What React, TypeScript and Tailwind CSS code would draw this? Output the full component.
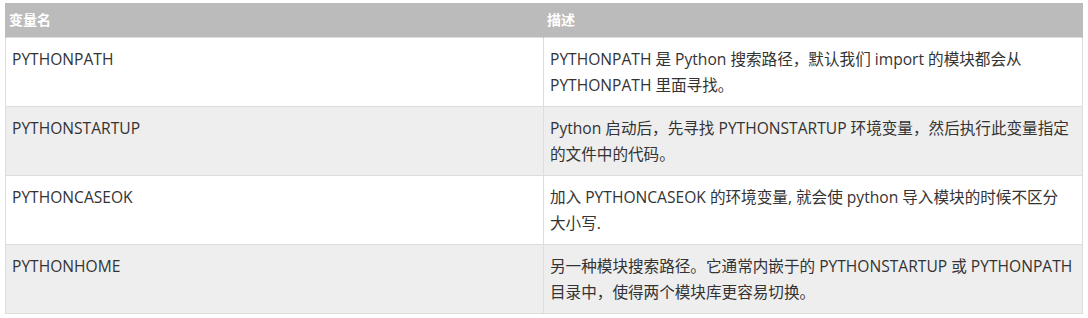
import type { ReactNode } from "react";

const rows: { name: string; desc: ReactNode }[] = [
  {
    name: "PYTHONPATH",
    desc: "PYTHONPATH 是 Python 搜索路径，默认我们 import 的模块都会从 PYTHONPATH 里面寻找。",
  },
  {
    name: "PYTHONSTARTUP",
    desc: "Python 启动后，先寻找 PYTHONSTARTUP 环境变量，然后执行此变量指定的文件中的代码。",
  },
  {
    name: "PYTHONCASEOK",
    desc: (
      <>
        加入 PYTHONCASEOK 的环境变量, 就会使 python 导入模块的时候不区分
        <span className="whitespace-nowrap">大小写.</span>
      </>
    ),
  },
  {
    name: "PYTHONHOME",
    desc: "另一种模块搜索路径。它通常内嵌于的 PYTHONSTARTUP 或 PYTHONPATH 目录中，使得两个模块库更容易切换。",
  },
];

export default function App() {
  return (
    <div className="bg-white w-[1088px] h-[318px] pt-[3px] pl-[5px] font-['Open_Sans','Noto_Sans_CJK_SC',sans-serif] text-[15.6px] text-[#333]">
      <table className="w-[1078px] border-collapse table-fixed">
        <thead>
          <tr className="bg-[#bbbbbb] text-white">
            <th className="w-[538px] h-[34px] px-[3px] text-left font-bold text-[14px] border-x border-[#bbbbbb]">
              变量名
            </th>
            <th className="h-[34px] px-[3px] text-left font-bold text-[14px] border-x border-[#bbbbbb]">
              描述
            </th>
          </tr>
        </thead>
        <tbody>
          {rows.map((r, i) => (
            <tr key={r.name} className={i % 2 === 1 ? "bg-[#eeeeee]" : "bg-white"}>
              <td className="align-top h-[69px] px-[6px] pt-[8px] pb-[8px] leading-[26px] border border-[#dddddd]">
                {r.name}
              </td>
              <td className="align-top h-[69px] px-[6px] pt-[8px] pb-[8px] leading-[26px] border border-[#dddddd]">
                {r.desc}
              </td>
            </tr>
          ))}
        </tbody>
      </table>
    </div>
  );
}
